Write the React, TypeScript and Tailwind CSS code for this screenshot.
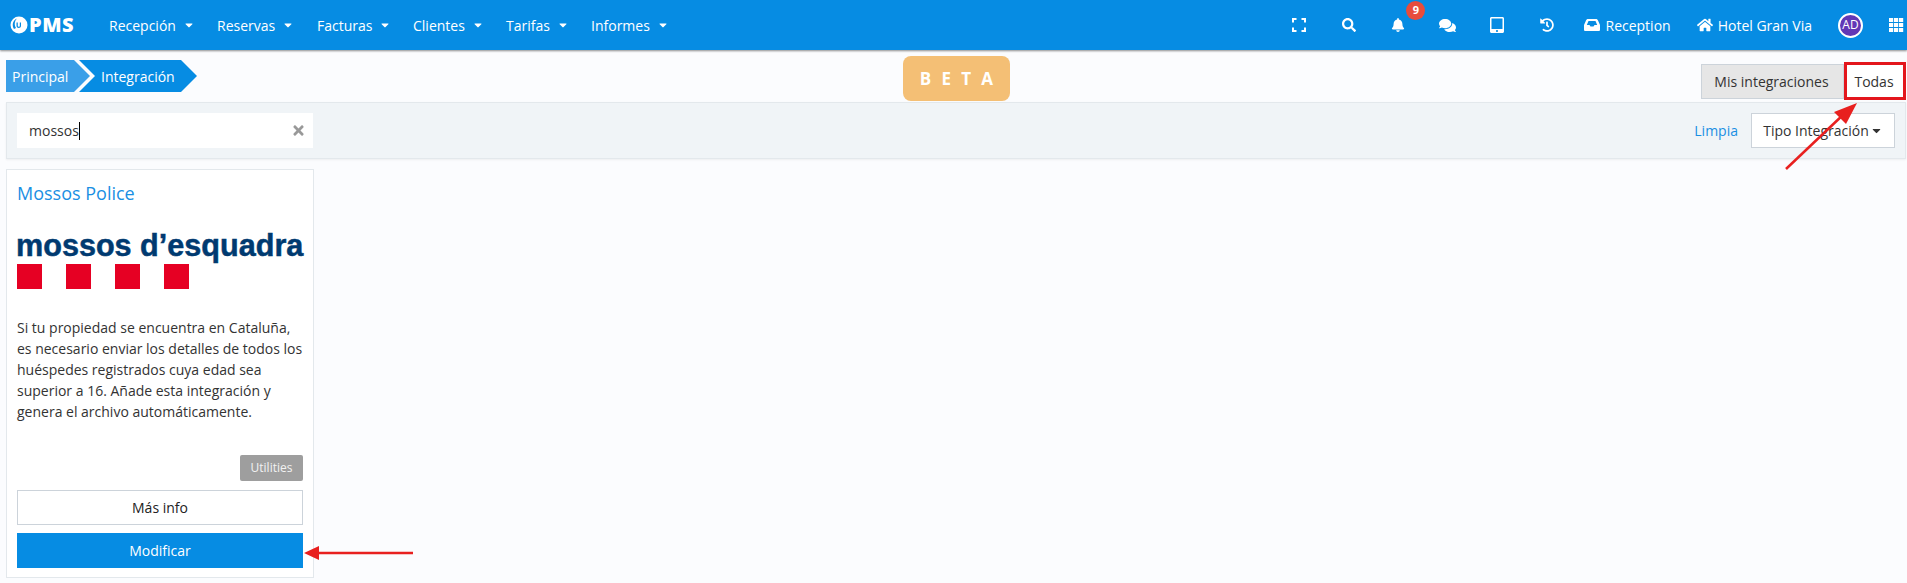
import React from 'react';
import { FaBell, FaCaretDown, FaComments, FaHistory, FaHome, FaSearch, FaTabletAlt, FaTimes } from 'react-icons/fa';

const menuItems = [
  { label: 'Recepción', width: 'w-[108px]' },
  { label: 'Reservas', width: 'w-[100px]' },
  { label: 'Facturas', width: 'w-[96px]' },
  { label: 'Clientes', width: 'w-[93px]' },
  { label: 'Tarifas', width: 'w-[85px]' },
  { label: 'Informes', width: 'w-[90px]' },
];

const descriptionLines = [
  'Si tu propiedad se encuentra en Cataluña,',
  'es necesario enviar los detalles de todos los',
  'huéspedes registrados cuya edad sea',
  'superior a 16. Añade esta integración y',
  'genera el archivo automáticamente.',
];

function LogoMark() {
  return (
    <svg width="18" height="18" viewBox="0 0 18 18" className="shrink-0">
      <circle cx="9" cy="9" r="8.5" fill="#fff" />
      <path d="M4 13 C1.5 9 3 4 7 2.5 C4.5 5 4 9 6 12 Z" fill="#068ce3" />
      <path d="M6.5 6.5 V10 C6.5 12.5 11 12.5 11 10 V6.5 H9.8 V10 C9.8 11 7.8 11 7.8 10 V6.5 Z" fill="#068ce3" />
    </svg>
  );
}

function ExpandIcon() {
  return (
    <svg width="14" height="14" viewBox="0 0 14 14" fill="none" stroke="#fff" strokeWidth="2">
      <path d="M1 4.5 V1 H4.5 M9.5 1 H13 V4.5 M13 9.5 V13 H9.5 M4.5 13 H1 V9.5" />
    </svg>
  );
}

function TrayIcon() {
  return (
    <svg width="16" height="12" viewBox="0 0 16 12" fill="#fff">
      <path d="M4 0 H12 C13 0 13.5 .5 14 1.5 L16 6 V10.5 C16 11.5 15.5 12 14.5 12 H1.5 C.5 12 0 11.5 0 10.5 V6 L2 1.5 C2.5 .5 3 0 4 0 Z M4.5 2 L2.8 6 H5.5 L6.5 7.6 H9.5 L10.5 6 H13.2 L11.5 2 Z" fillRule="evenodd" />
    </svg>
  );
}

function GridIcon() {
  return (
    <svg width="15" height="14" viewBox="0 0 15 14" fill="#fff">
      {[0, 5, 10].map((x) =>
        [0, 5, 10].map((y) => <rect key={`${x}-${y}`} x={x} y={y} width="4.2" height="4" />)
      )}
    </svg>
  );
}

function IconSlot({ children }: { children: React.ReactNode }) {
  return <div className="relative w-[49.5px] flex items-center justify-center">{children}</div>;
}

function Header() {
  return (
    <header className="h-[50px] bg-[#068ce3] text-white flex items-center justify-between shadow-[0_1px_2px_rgba(0,0,0,0.45)] relative">
      <div className="flex items-center">
        <div className="flex items-center w-[109px] pl-[10px] gap-[1px]">
          <LogoMark />
          <span className="font-['Open_Sans'] font-extrabold text-[20px] leading-none tracking-[0.5px]">PMS</span>
        </div>
        {menuItems.map((item) => (
          <div key={item.label} className={`${item.width} flex items-center gap-[7px] text-[14px]`}>
            <span>{item.label}</span>
            <FaCaretDown className="text-[12px]" />
          </div>
        ))}
      </div>
      <div className="flex items-center pr-[3px]">
        <IconSlot><ExpandIcon /></IconSlot>
        <IconSlot><FaSearch className="text-[14px]" /></IconSlot>
        <IconSlot>
          <FaBell className="text-[14px]" />
          <span className="absolute left-[33px] -top-[17px] w-[19px] h-[19px] rounded-full bg-[#e74c3c] text-[11px] font-bold flex items-center justify-center">9</span>
        </IconSlot>
        <IconSlot><FaComments className="text-[17px]" /></IconSlot>
        <IconSlot><FaTabletAlt className="text-[16px]" /></IconSlot>
        <IconSlot><FaHistory className="text-[14px]" /></IconSlot>
        <div className="flex items-center gap-[5px] text-[14px] ml-[13px]">
          <TrayIcon />
          <span>Reception</span>
        </div>
        <div className="flex items-center gap-[5px] text-[14px] ml-[26px]">
          <FaHome className="text-[16px]" />
          <span>Hotel Gran Via</span>
        </div>
        <div className="ml-[26px] w-[25px] h-[25px] rounded-full bg-[#6237b5] border-2 border-white flex items-center justify-center text-[12px]">AD</div>
        <div className="ml-[26px]"><GridIcon /></div>
      </div>
    </header>
  );
}

function TopRow() {
  return (
    <div className="h-[52px] grid grid-cols-[1fr_108px_1fr] pl-[6px] pr-[1px]">
      <div className="flex pt-[10px] text-[14px] text-white">
        <div className="h-[32px] w-[84px] pl-[6px] flex items-center bg-[#3a9fe8] [clip-path:polygon(0_0,68px_0,84px_50%,68px_100%,0_100%)]">Principal</div>
        <div className="h-[32px] w-[118px] -ml-[11px] pl-[22px] flex items-center bg-[#068ce3] [clip-path:polygon(0_0,102px_0,118px_50%,102px_100%,0_100%,16px_50%)]">Integración</div>
      </div>
      <div className="mt-[6px] h-[45px] ml-[1px] pl-[10px] rounded-lg bg-[#f4bf75] text-white font-bold text-[17px] tracking-[0.6em] flex items-center justify-center">BETA</div>
      <div className="flex justify-end items-end pb-[3px] text-[14px] text-[#333]">
        <div className="h-[35px] w-[143px] pr-[2px] flex items-center justify-center bg-[#e6e6e6] border border-[#ccd3da]">Mis integraciones</div>
        <div className="h-[38px] w-[62px] pr-[2px] flex items-center justify-center bg-white border-[3px] border-[#e3161c] -mb-[1px]">Todas</div>
      </div>
    </div>
  );
}

function FilterBar() {
  return (
    <div className="ml-[6px] mr-[1px] h-[57px] bg-[#f0f4f7] border border-[#e3e8ec] shadow-[0_1px_2px_rgba(0,0,0,0.06)] flex items-center justify-between pl-[10px] pr-[10px] text-[14px]">
      <div className="w-[296px] h-[35px] bg-white flex items-center justify-between pl-[12px] pr-[7px] text-[#333]">
        <div className="flex items-center">
          <span>mossos</span>
          <span className="w-px h-[18px] bg-black" />
        </div>
        <FaTimes className="text-[15px] text-[#999]" />
      </div>
      <div className="flex items-center gap-[13px]">
        <span className="text-[#1a8fe3]">Limpia</span>
        <div className="w-[144px] h-[35px] bg-white border border-[#ccd3da] flex items-center justify-center gap-[1px] text-[#333]">
          <span>Tipo Integración</span>
          <FaCaretDown className="text-[13px]" />
        </div>
      </div>
    </div>
  );
}

function IntegrationCard() {
  return (
    <div className="mt-[10px] ml-[6px] w-[308px] h-[409px] bg-white border border-[#e3e8ec] px-[10px] flex flex-col text-[#333]">
      <div className="h-[45px] pt-[10px] text-[18px] leading-[27px] text-[#1a8fe3] whitespace-nowrap">Mossos Police</div>
      <div className="mt-[20px] h-[55px]">
        <div className="-ml-[1px] font-['Liberation_Sans'] font-bold text-[#003a70] text-[30.6px] leading-[21px] h-[29px] whitespace-nowrap [-webkit-text-stroke:0.5px_#003a70]">mossos d’esquadra</div>
        <div className="flex gap-[24px]">
          <span className="w-[25px] h-[25px] bg-[#e60023]" />
          <span className="w-[25px] h-[25px] bg-[#e60023]" />
          <span className="w-[25px] h-[25px] bg-[#e60023]" />
          <span className="w-[25px] h-[25px] bg-[#e60023]" />
        </div>
      </div>
      <div className="mt-[27px] text-[14px] leading-[21px] h-[105px] whitespace-nowrap">
        {descriptionLines.map((line) => (
          <p key={line}>{line}</p>
        ))}
      </div>
      <div className="mt-[33px] flex justify-end">
        <span className="w-[63px] h-[26px] rounded-[2px] bg-[#9e9e9e] text-[#f2f2f2] text-[12px] flex items-center justify-center">Utilities</span>
      </div>
      <div className="mt-[9px] h-[35px] border border-[#ccd3da] flex items-center justify-center text-[14px] text-[#222]">Más info</div>
      <div className="mt-[8px] h-[35px] bg-[#068ce3] text-white flex items-center justify-center text-[14px]">Modificar</div>
    </div>
  );
}

export default function App() {
  return (
    <div className="relative w-full h-[583px] overflow-hidden bg-[#fbfcfe] font-['Open_Sans',sans-serif]">
      <Header />
      <TopRow />
      <FilterBar />
      <IntegrationCard />
      {/* flechas rojas de la anotacion */}
      <svg className="absolute inset-0 pointer-events-none" width="1907" height="583" viewBox="0 0 1907 583" fill="none">
        <line x1="1786" y1="169" x2="1845" y2="113" stroke="#e8201f" strokeWidth="2.5" />
        <polygon points="1857,103 1834,112 1846,124" fill="#e8201f" />
        <line x1="413" y1="553" x2="316" y2="553" stroke="#e8201f" strokeWidth="2.5" />
        <polygon points="304,553 319,546 319,560" fill="#e8201f" />
      </svg>
    </div>
  );
}
